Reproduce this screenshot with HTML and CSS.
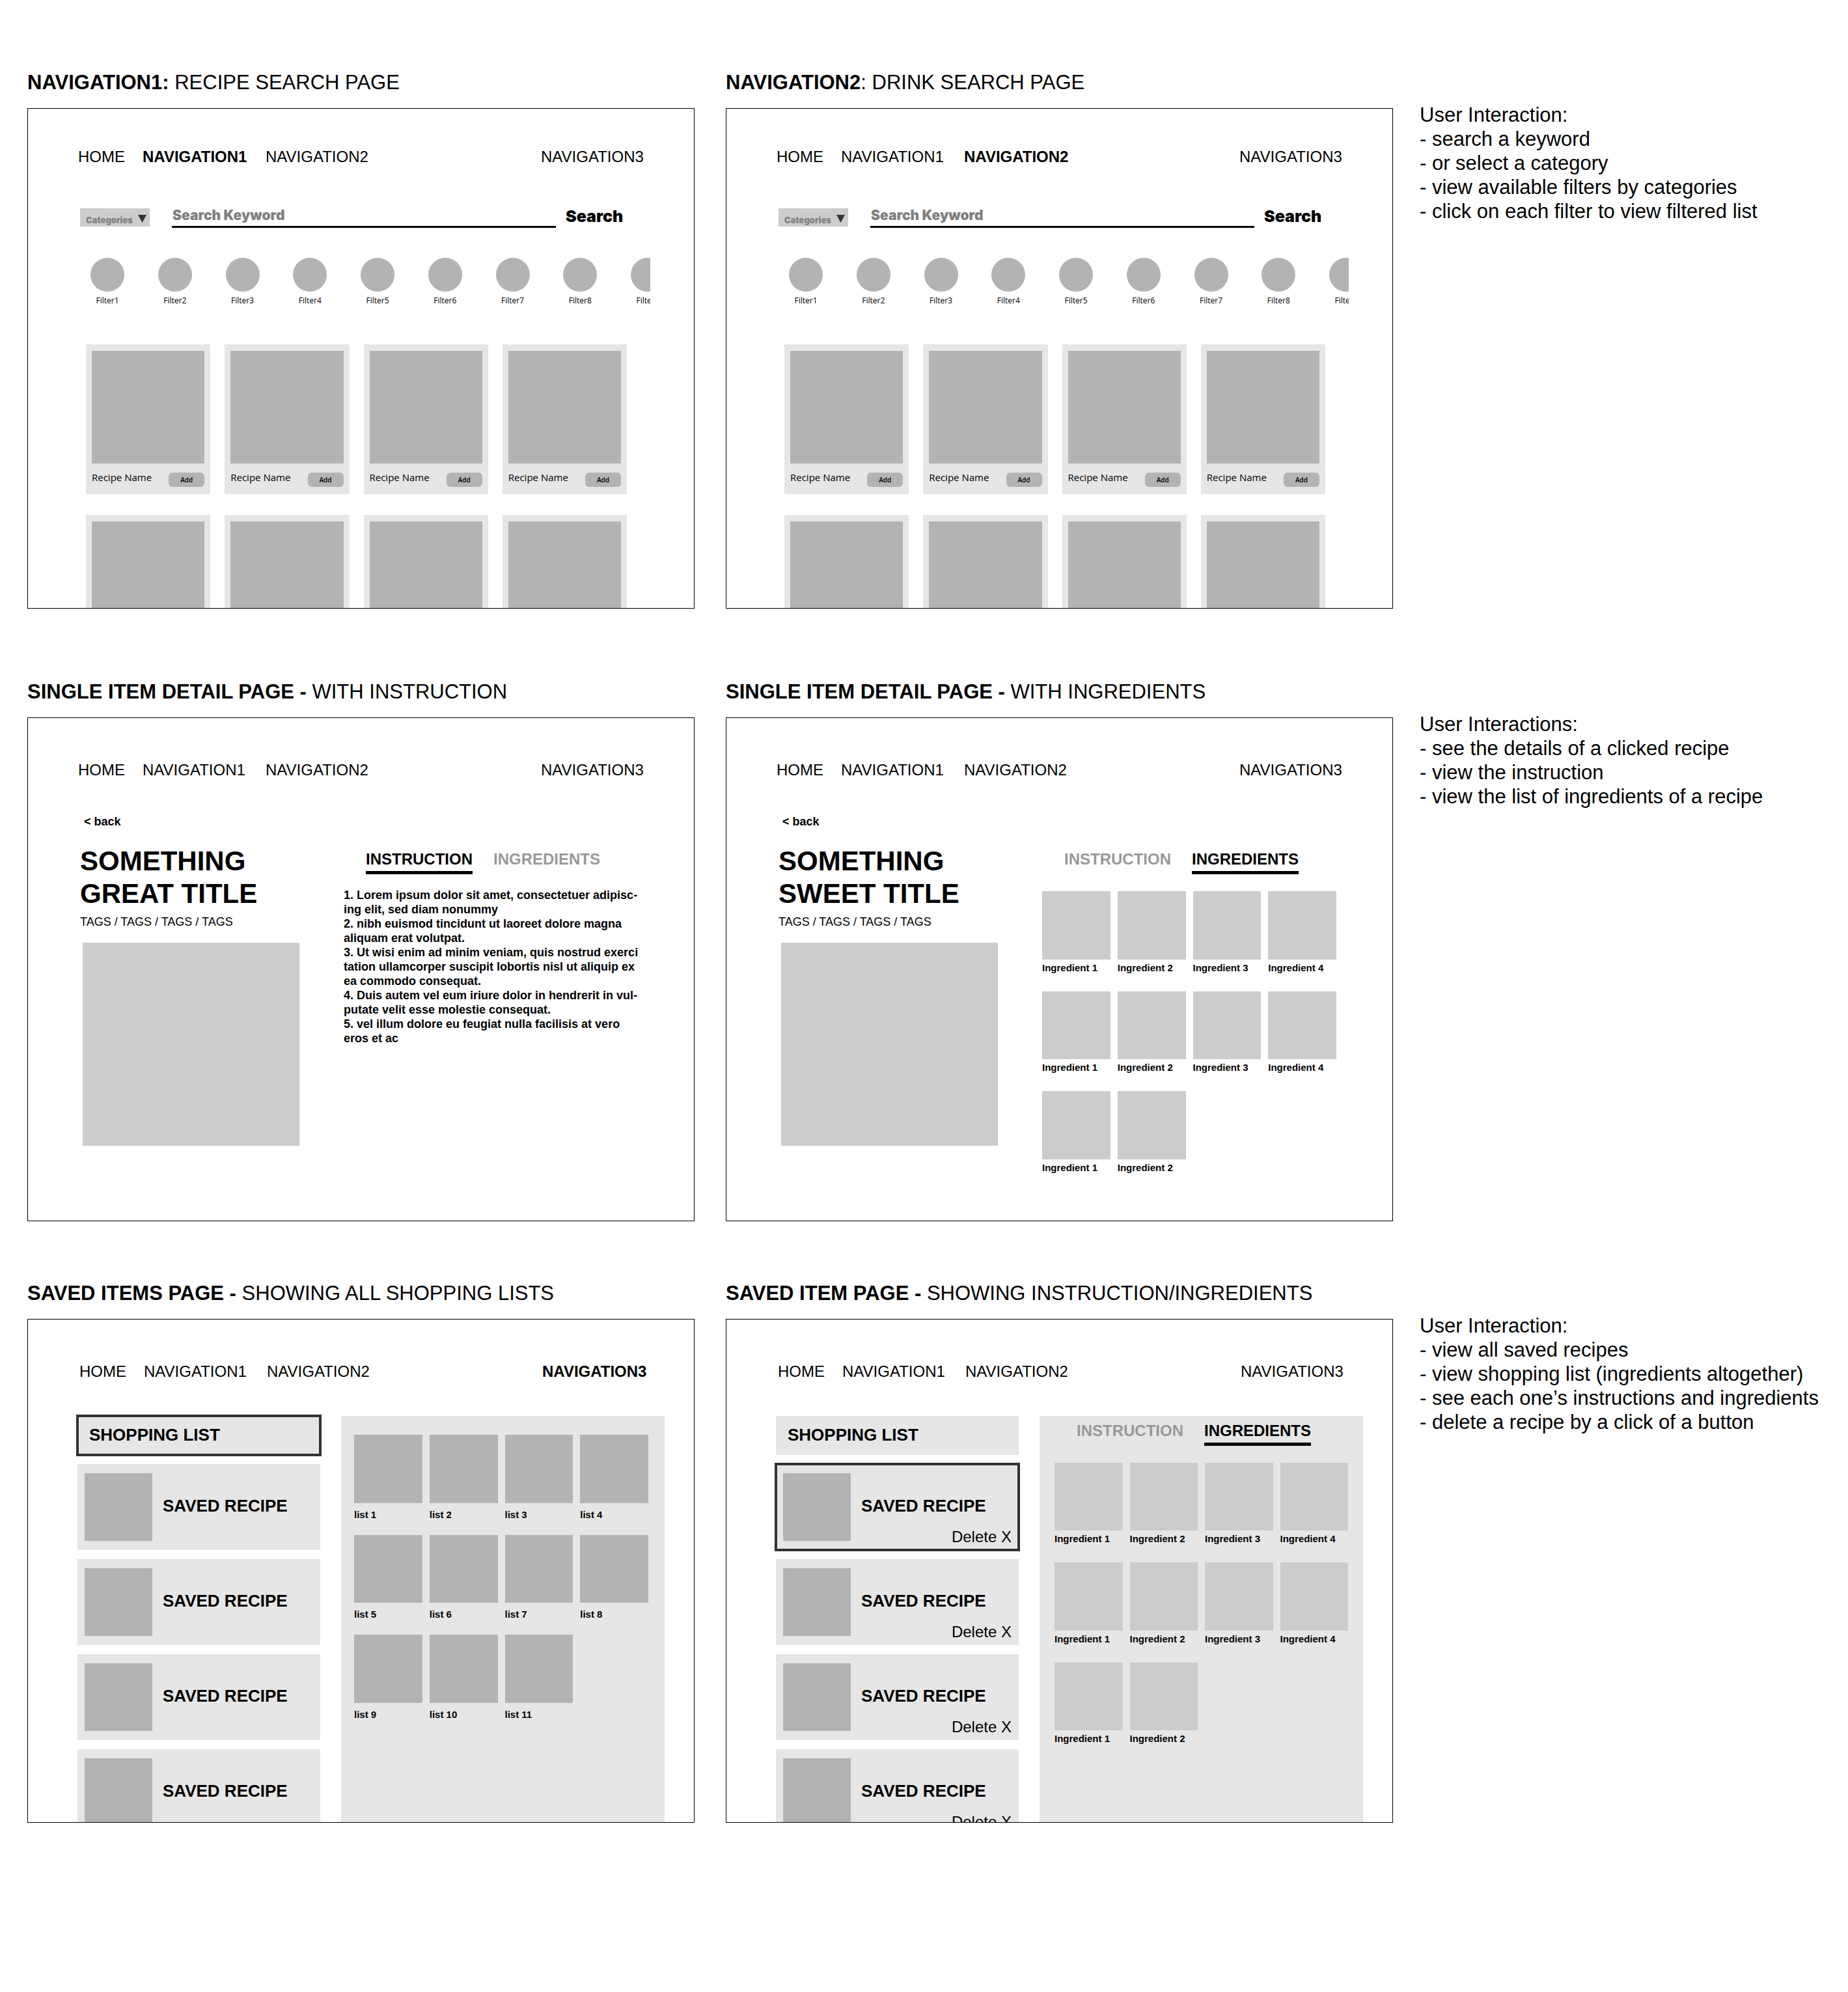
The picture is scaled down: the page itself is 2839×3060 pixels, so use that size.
FILE: index.html
```html
<!DOCTYPE html>
<html lang="en">
<head>
<meta charset="utf-8">
<title>Recipe app wireframes</title>
<link rel="stylesheet" href="styles.css">
</head>
<body>
<main class="board">

<section class="row row--search">
  <div class="pair">
    <article>
      <h2 class="caption"><b>NAVIGATION1:</b> RECIPE SEARCH PAGE</h2>
      <div class="frame frame--search">
        <nav class="nav"><a href="#">HOME</a><a href="#" class="is-current">NAVIGATION1</a><a href="#">NAVIGATION2</a><a href="#">NAVIGATION3</a></nav>
        <form class="search">
          <div class="category">
            <select aria-label="Categories"><option>Categories</option></select>
            <svg viewBox="0 0 13 12" aria-hidden="true"><path d="M0 0h13L6.500 12z"/></svg>
          </div>
          <input type="text" aria-label="Search Keyword" placeholder="Search Keyword">
          <button type="button">Search</button>
        </form>
        <div class="filters"><ul>
          <li>Filter1</li><li>Filter2</li><li>Filter3</li><li>Filter4</li><li>Filter5</li><li>Filter6</li><li>Filter7</li><li>Filter8</li><li>Filter9</li>
        </ul></div>
        <div class="cards">
          <div class="card"><div class="card-image"></div><div class="card-foot"><span>Recipe Name</span><button type="button">Add</button></div></div>
          <div class="card"><div class="card-image"></div><div class="card-foot"><span>Recipe Name</span><button type="button">Add</button></div></div>
          <div class="card"><div class="card-image"></div><div class="card-foot"><span>Recipe Name</span><button type="button">Add</button></div></div>
          <div class="card"><div class="card-image"></div><div class="card-foot"><span>Recipe Name</span><button type="button">Add</button></div></div>
          <div class="card"><div class="card-image"></div></div>
          <div class="card"><div class="card-image"></div></div>
          <div class="card"><div class="card-image"></div></div>
          <div class="card"><div class="card-image"></div></div>
        </div>
      </div>
    </article>
    <article>
      <h2 class="caption"><b>NAVIGATION2</b>: DRINK SEARCH PAGE</h2>
      <div class="frame frame--search">
        <nav class="nav"><a href="#">HOME</a><a href="#">NAVIGATION1</a><a href="#" class="is-current">NAVIGATION2</a><a href="#">NAVIGATION3</a></nav>
        <form class="search">
          <div class="category">
            <select aria-label="Categories"><option>Categories</option></select>
            <svg viewBox="0 0 13 12" aria-hidden="true"><path d="M0 0h13L6.500 12z"/></svg>
          </div>
          <input type="text" aria-label="Search Keyword" placeholder="Search Keyword">
          <button type="button">Search</button>
        </form>
        <div class="filters"><ul>
          <li>Filter1</li><li>Filter2</li><li>Filter3</li><li>Filter4</li><li>Filter5</li><li>Filter6</li><li>Filter7</li><li>Filter8</li><li>Filter9</li>
        </ul></div>
        <div class="cards">
          <div class="card"><div class="card-image"></div><div class="card-foot"><span>Recipe Name</span><button type="button">Add</button></div></div>
          <div class="card"><div class="card-image"></div><div class="card-foot"><span>Recipe Name</span><button type="button">Add</button></div></div>
          <div class="card"><div class="card-image"></div><div class="card-foot"><span>Recipe Name</span><button type="button">Add</button></div></div>
          <div class="card"><div class="card-image"></div><div class="card-foot"><span>Recipe Name</span><button type="button">Add</button></div></div>
          <div class="card"><div class="card-image"></div></div>
          <div class="card"><div class="card-image"></div></div>
          <div class="card"><div class="card-image"></div></div>
          <div class="card"><div class="card-image"></div></div>
        </div>
      </div>
    </article>
  </div>
  <aside class="notes">
    <p>User Interaction:</p>
    <p>- search a keyword</p>
    <p>- or select a category</p>
    <p>- view available filters by categories</p>
    <p>- click on each filter to view filtered list</p>
  </aside>
</section>

<section class="row row--detail">
  <div class="pair">
    <article>
      <h2 class="caption"><b>SINGLE ITEM DETAIL PAGE - </b>WITH INSTRUCTION</h2>
      <div class="frame">
        <nav class="nav"><a href="#">HOME</a><a href="#">NAVIGATION1</a><a href="#">NAVIGATION2</a><a href="#">NAVIGATION3</a></nav>
        <a href="#" class="back">&lt; back</a>
        <div class="detail">
          <div>
            <h1 class="title">SOMETHING<br>GREAT TITLE</h1>
            <p class="tags">TAGS / TAGS / TAGS / TAGS</p>
            <div class="photo"></div>
          </div>
          <div class="detail-side">
            <div class="tabs"><button type="button" class="is-active">INSTRUCTION</button><button type="button">INGREDIENTS</button></div>
            <ol class="steps">
              <li>Lorem ipsum dolor sit amet, consectetuer adipisc-<br>ing elit, sed diam nonummy</li>
              <li>nibh euismod tincidunt ut laoreet dolore magna<br>aliquam erat volutpat.</li>
              <li>Ut wisi enim ad minim veniam, quis nostrud exerci<br>tation ullamcorper suscipit lobortis nisl ut aliquip ex<br>ea commodo consequat.</li>
              <li>Duis autem vel eum iriure dolor in hendrerit in vul-<br>putate velit esse molestie consequat.</li>
              <li>vel illum dolore eu feugiat nulla facilisis at vero<br>eros et ac</li>
            </ol>
          </div>
        </div>
      </div>
    </article>
    <article>
      <h2 class="caption"><b>SINGLE ITEM DETAIL PAGE - </b>WITH INGREDIENTS</h2>
      <div class="frame">
        <nav class="nav"><a href="#">HOME</a><a href="#">NAVIGATION1</a><a href="#">NAVIGATION2</a><a href="#">NAVIGATION3</a></nav>
        <a href="#" class="back">&lt; back</a>
        <div class="detail">
          <div>
            <h1 class="title">SOMETHING<br>SWEET TITLE</h1>
            <p class="tags">TAGS / TAGS / TAGS / TAGS</p>
            <div class="photo"></div>
          </div>
          <div class="detail-side">
            <div class="tabs"><button type="button">INSTRUCTION</button><button type="button" class="is-active">INGREDIENTS</button></div>
            <ul class="tiles">
              <li>Ingredient 1</li><li>Ingredient 2</li><li>Ingredient 3</li><li>Ingredient 4</li>
              <li>Ingredient 1</li><li>Ingredient 2</li><li>Ingredient 3</li><li>Ingredient 4</li>
              <li>Ingredient 1</li><li>Ingredient 2</li>
            </ul>
          </div>
        </div>
      </div>
    </article>
  </div>
  <aside class="notes">
    <p>User Interactions:</p>
    <p>- see the details of a clicked recipe</p>
    <p>- view the instruction</p>
    <p>- view the list of ingredients of a recipe</p>
  </aside>
</section>

<section class="row row--saved">
  <div class="pair">
    <article>
      <h2 class="caption"><b>SAVED ITEMS PAGE - </b>SHOWING ALL SHOPPING LISTS</h2>
      <div class="frame">
        <nav class="nav"><a href="#">HOME</a><a href="#">NAVIGATION1</a><a href="#">NAVIGATION2</a><a href="#" class="is-current">NAVIGATION3</a></nav>
        <div class="saved">
          <div class="sidebar">
            <div class="shopping is-selected">SHOPPING LIST</div>
            <div class="item"><div class="thumb"></div><span class="item-name">SAVED RECIPE</span></div>
            <div class="item"><div class="thumb"></div><span class="item-name">SAVED RECIPE</span></div>
            <div class="item"><div class="thumb"></div><span class="item-name">SAVED RECIPE</span></div>
            <div class="item"><div class="thumb"></div><span class="item-name">SAVED RECIPE</span></div>
          </div>
          <div class="panel panel--list">
            <ul class="tiles tiles--list">
              <li>list 1</li><li>list 2</li><li>list 3</li><li>list 4</li>
              <li>list 5</li><li>list 6</li><li>list 7</li><li>list 8</li>
              <li>list 9</li><li>list 10</li><li>list 11</li>
            </ul>
          </div>
        </div>
      </div>
    </article>
    <article>
      <h2 class="caption"><b>SAVED ITEM PAGE - </b>SHOWING INSTRUCTION/INGREDIENTS</h2>
      <div class="frame">
        <nav class="nav"><a href="#">HOME</a><a href="#">NAVIGATION1</a><a href="#">NAVIGATION2</a><a href="#">NAVIGATION3</a></nav>
        <div class="saved">
          <div class="sidebar">
            <div class="shopping">SHOPPING LIST</div>
            <div class="item is-selected"><div class="thumb"></div><span class="item-name">SAVED RECIPE</span><button type="button">Delete X</button></div>
            <div class="item"><div class="thumb"></div><span class="item-name">SAVED RECIPE</span><button type="button">Delete X</button></div>
            <div class="item"><div class="thumb"></div><span class="item-name">SAVED RECIPE</span><button type="button">Delete X</button></div>
            <div class="item"><div class="thumb"></div><span class="item-name">SAVED RECIPE</span><button type="button">Delete X</button></div>
          </div>
          <div class="panel">
            <div class="tabs"><button type="button">INSTRUCTION</button><button type="button" class="is-active">INGREDIENTS</button></div>
            <ul class="tiles">
              <li>Ingredient 1</li><li>Ingredient 2</li><li>Ingredient 3</li><li>Ingredient 4</li>
              <li>Ingredient 1</li><li>Ingredient 2</li><li>Ingredient 3</li><li>Ingredient 4</li>
              <li>Ingredient 1</li><li>Ingredient 2</li>
            </ul>
          </div>
        </div>
      </div>
    </article>
  </div>
  <aside class="notes">
    <p>User Interaction:</p>
    <p>- view all saved recipes</p>
    <p>- view shopping list (ingredients altogether)</p>
    <p>- see each one’s instructions and ingredients</p>
    <p>- delete a recipe by a click of a button</p>
  </aside>
</section>

</main>
</body>
</html>
```
FILE: styles.css
```css
*, *::before { box-sizing: border-box; }

body {
  margin: 0;
  background: #fff;
  color: #000;
  font-family: "Liberation Sans", Arial, sans-serif;
}

h1, h2, p, ul, ol { margin: 0; padding: 0; }
ul { list-style: none; }
a { color: inherit; text-decoration: none; }

button {
  padding: 0;
  border: 0;
  background: none;
  color: inherit;
  font: inherit;
  text-align: left;
  cursor: pointer;
}

/* Board */
.board { padding: 108px 41px 260px 42px; }

.row {
  display: grid;
  grid-template-columns: minmax(0, 2098fr) minmax(0, 618fr);
  gap: 40px;
}
.row--search { margin-bottom: 109px; }
.row--detail { margin-bottom: 92px; }

.pair {
  display: grid;
  grid-template-columns: repeat(2, minmax(0, 1fr));
  gap: 48px;
}

.caption {
  margin-bottom: 20px;
  font-size: 31px;
  font-weight: 400;
  line-height: 38px;
  white-space: nowrap;
}

.notes {
  padding: 50px 0 0 1px;
  font-size: 31px;
  line-height: 37px;
  white-space: nowrap;
}

.frame {
  display: flex;
  flex-direction: column;
  aspect-ratio: 1025 / 774;
  padding-top: 65px;
  border: 1px solid #000;
  overflow: hidden;
}
.frame--search {
  aspect-ratio: 4 / 3;
  padding-top: 59px;
}
.frame > * { flex-shrink: 0; }

/* Navigation */
.nav {
  display: grid;
  grid-template-columns: 99px 189px 1fr 164px;
  padding: 0 71px 0 77px;
  font-size: 24px;
  line-height: 30px;
  white-space: nowrap;
}
.row--saved .nav { padding: 0 69px 0 79px; }
.nav .is-current { font-weight: 700; }

/* Search */
.search {
  display: flex;
  align-items: flex-start;
  margin-top: 64px;
  padding: 0 103px 0 80px;
  font-family: Inter, "Liberation Sans", sans-serif;
  font-weight: 900;
}
.category {
  position: relative;
  margin-right: 34px;
}
.category select {
  display: block;
  width: 107px;
  height: 28px;
  padding: 8px 0 0 9px;
  border: 0;
  border-radius: 0;
  background: #ccc;
  color: #808080;
  font: inherit;
  font-size: 13px;
  appearance: none;
}
.category svg {
  position: absolute;
  top: 10px;
  right: 5px;
  width: 13px;
  height: 12px;
  fill: #333;
  pointer-events: none;
}
.search input {
  flex: 1;
  min-width: 0;
  height: 30px;
  margin-right: 15px;
  padding: 0 0 7px 1px;
  border: 0;
  border-bottom: 3px solid #000;
  border-radius: 0;
  background: none;
  font: inherit;
  font-size: 21px;
}
.search input::placeholder { color: #808080; opacity: 1; }
.search button {
  width: 94px;
  font-size: 25px;
  line-height: 24px;
}

.filters {
  margin: 46px 67px 0 96px;
  overflow: hidden;
  font-family: "Open Sans", "Noto Sans", sans-serif;
  font-size: 12px;
  line-height: 16px;
}
.filters ul {
  display: flex;
  justify-content: space-between;
  margin-right: -22px;
}
.filters li {
  width: 52px;
  text-align: center;
}
.filters li::before {
  content: "";
  display: block;
  height: 52px;
  margin-bottom: 6px;
  border-radius: 50%;
  background: #b3b3b3;
}

.cards {
  display: grid;
  grid-template-columns: repeat(4, minmax(0, 1fr));
  gap: 32px 22px;
  margin-top: 59px;
  padding: 0 103px 0 89px;
}
.card {
  padding: 10px 9px 11px;
  background: #e6e6e6;
}
.card-image {
  aspect-ratio: 1;
  background: #b3b3b3;
}
.card-foot {
  display: flex;
  justify-content: space-between;
  height: 25px;
  margin-top: 11px;
  font-family: "Open Sans", "Noto Sans", sans-serif;
  font-size: 15px;
  line-height: 20px;
  white-space: nowrap;
}
.card-foot button {
  align-self: flex-end;
  width: 55px;
  height: 22px;
  border-radius: 6px;
  background: #b3b3b3;
  font-size: 10px;
  font-weight: 600;
  text-align: center;
}

/* Recipe detail */
.back {
  margin: 53px 0 25px 86px;
  font-size: 18px;
  font-weight: 700;
  line-height: 22px;
}
.detail {
  display: grid;
  grid-template-columns: minmax(0, 337fr) minmax(0, 452fr);
  column-gap: 68px;
  padding: 0 86px 0 80px;
}
.title {
  font-size: 42px;
  line-height: 50px;
  white-space: nowrap;
}
.tags {
  margin: 7px 0 21px;
  font-size: 18px;
  line-height: 22px;
  white-space: nowrap;
}
.photo {
  aspect-ratio: 333 / 312;
  margin-left: 4px;
  background: #ccc;
}
.detail-side { padding-top: 8px; }

.tabs {
  display: flex;
  gap: 32px;
  padding-left: 34px;
  font-size: 24px;
  font-weight: 700;
  line-height: 28px;
}
.tabs button {
  padding-bottom: 4px;
  border-bottom: 5px solid transparent;
  color: #999;
}
.tabs .is-active {
  border-color: #000;
  color: #000;
}

.steps {
  margin-top: 21px;
  font-size: 18px;
  font-weight: 700;
  line-height: 22px;
  list-style-position: inside;
  white-space: nowrap;
}

.tiles {
  display: grid;
  grid-template-columns: repeat(4, minmax(0, 1fr));
  gap: 27px 11px;
  margin-top: 26px;
  font-size: 15px;
  font-weight: 700;
  line-height: 18px;
  white-space: nowrap;
}
.tiles li::before {
  content: "";
  display: block;
  aspect-ratio: 1;
  margin-bottom: 4px;
  background: #ccc;
}

/* Saved recipes */
.saved {
  display: grid;
  flex: 1;
  grid-template-columns: minmax(0, 373fr) minmax(0, 497fr);
  column-gap: 32px;
  margin-top: 53px;
  padding: 0 45px 0 76px;
}
.sidebar {
  display: flex;
  flex-direction: column;
  gap: 14px;
  font-size: 26px;
  line-height: 30px;
}
.shopping {
  padding: 14px 18px 16px;
  background: #e6e6e6;
  font-weight: 700;
}
.item {
  display: grid;
  grid-template-columns: 104px 1fr;
  column-gap: 16px;
  align-items: center;
  padding: 14px 11px;
  background: #e6e6e6;
}
.is-selected {
  outline: 4px solid #333;
  outline-offset: -2px;
}
.thumb {
  aspect-ratio: 1;
  background: #b3b3b3;
}
.item-name {
  grid-area: 1 / 2;
  padding-bottom: 4px;
  font-weight: 700;
}
.item button {
  grid-area: 1 / 2;
  align-self: end;
  justify-self: end;
  margin-bottom: -8px;
  font-size: 24px;
  line-height: 28px;
}

.panel {
  padding: 9px 23px 0;
  background: #e6e6e6;
}
.panel--list { padding: 29px 25px 0 20px; }
.tiles--list {
  row-gap: 22px;
  margin-top: 0;
}
.tiles--list li::before {
  margin-bottom: 9px;
  background: #b3b3b3;
}
```
